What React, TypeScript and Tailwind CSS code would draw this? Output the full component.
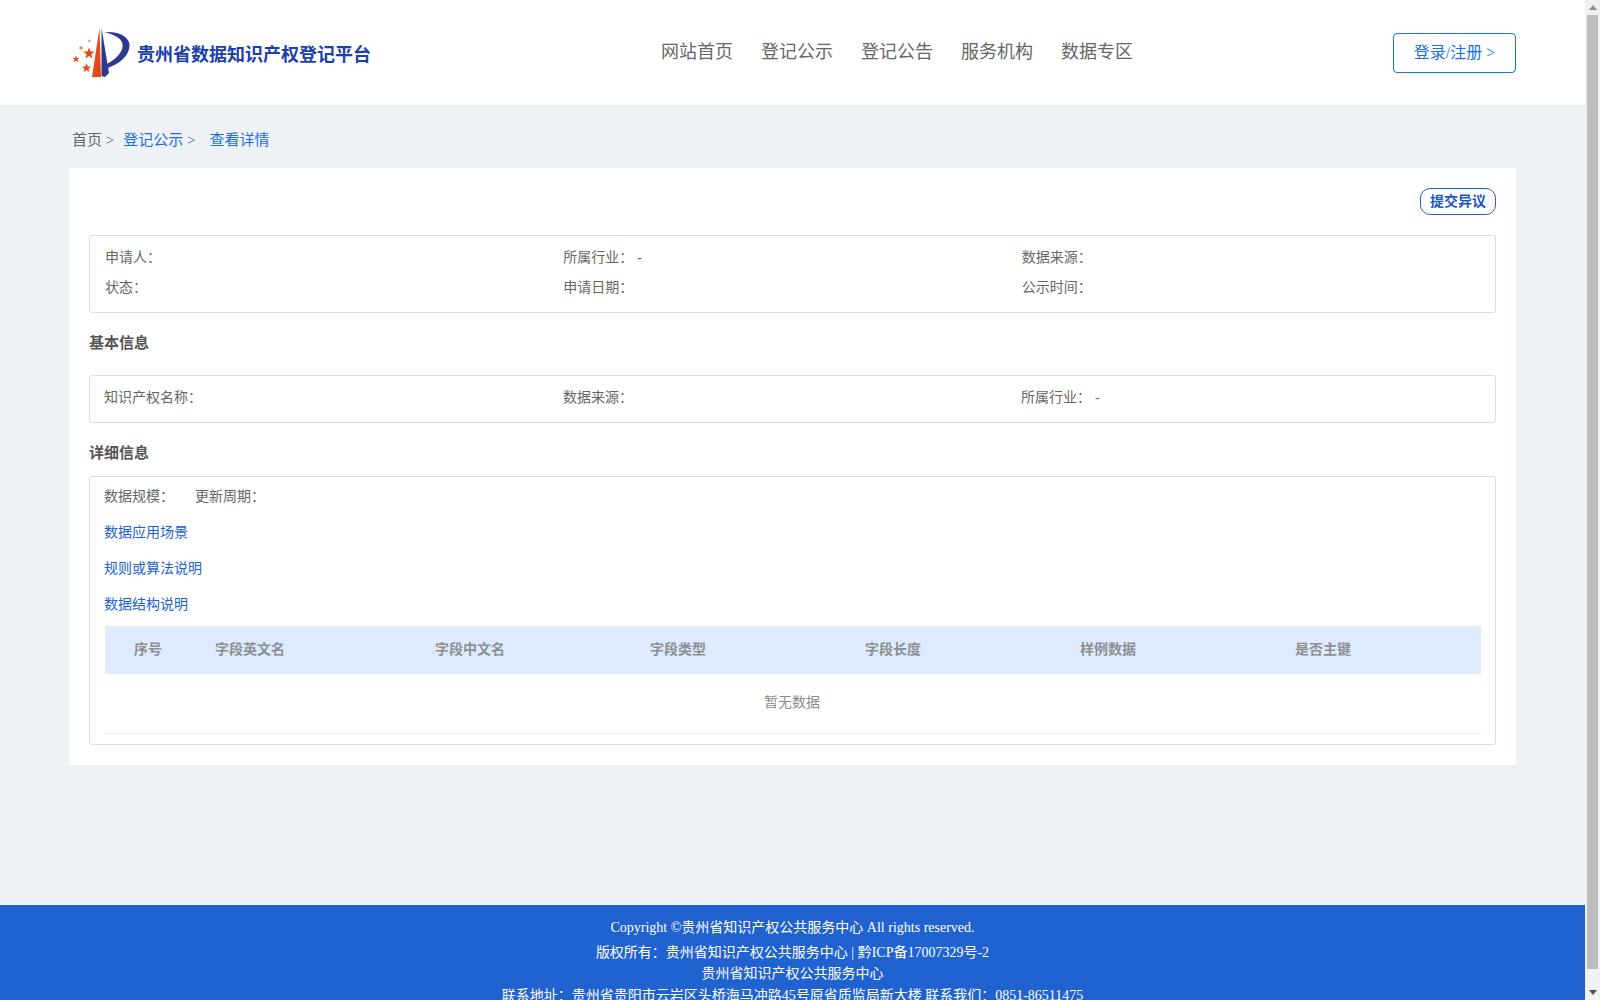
import React from "react";

const Field = ({ label, value }: { label: string; value?: string }) => (
  <div className="flex gap-[4px]">
    <span>{label}：</span>
    {value ? <span>{value}</span> : null}
  </div>
);

const Logo = () => (
  <svg width="62" height="56" viewBox="70 25 62 56" className="shrink-0">
    <path d="M99.5 28 L101 77 L92 77 Z" fill="#e8471a" />
    <path d="M101.5 28 L109 73 L105 77 L101.5 76 Z" fill="#2b3a8f" />
    <path d="M104 32 C120 31 130 37 129.5 46 C129 57 118 64 108 68 L107 64 C116 59 123 52 122.7 45 C122.3 38 113 34 104 32 Z" fill="#2b3a8f" />
    <polygon points="89,47.5 90.5,51.5 94.8,51.5 91.4,54.2 92.6,58.4 89,56 85.4,58.4 86.6,54.2 83.2,51.5 87.5,51.5" fill="#e8471a" />
    <polygon points="76,55.5 77,58 79.6,58 77.5,59.6 78.3,62.2 76,60.7 73.7,62.2 74.5,59.6 72.4,58 75,58" fill="#e8471a" />
    <polygon points="86.5,63.5 87.8,66.6 91.2,66.7 88.5,68.8 89.5,72 86.5,70.1 83.5,72 84.5,68.8 81.8,66.7 85.2,66.6" fill="#e8471a" />
    <circle cx="81" cy="48" r="1.8" fill="#ee8a5e" />
    <circle cx="89.3" cy="41" r="1.3" fill="#f0a080" />
  </svg>
);

const columns = ["序号", "字段英文名", "字段中文名", "字段类型", "字段长度", "样例数据", "是否主键"];

const Scrollbar = () => (
  <div className="fixed right-0 top-0 h-[1000px] w-[15px] bg-[#f1f1f1] flex flex-col items-center">
    <div className="h-[15px] w-full flex items-center justify-center">
      <svg width="8" height="5" viewBox="0 0 8 5"><path d="M4 0 L8 5 L0 5 Z" fill="#8f8f8f" /></svg>
    </div>
    <div className="h-[954px] w-[11px] bg-[#bdbdbd]" />
    <div className="flex-1" />
    <div className="h-[15px] w-full flex items-center justify-center">
      <svg width="8" height="5" viewBox="0 0 8 5"><path d="M0 0 L8 0 L4 5 Z" fill="#505050" /></svg>
    </div>
  </div>
);

export default function App() {
  return (
    <div
      className="w-[1585px] min-h-[1018px] flex flex-col bg-[#eff2f5] text-[#666]"
      style={{ fontFamily: '"Liberation Serif", "Noto Sans CJK SC", serif' }}
    >
      <Scrollbar />
      <header className="h-[105px] bg-white flex items-center px-[69px]">
        <div className="w-[592px] flex items-center gap-[5px] pl-[1px]">
          <Logo />
          <span className="mt-[6px] text-[18px] font-bold text-[#1c3fae]">贵州省数据知识产权登记平台</span>
        </div>
        <nav className="flex-1 flex gap-[28px] text-[18px] text-[#666]">
          <a>网站首页</a>
          <a>登记公示</a>
          <a>登记公告</a>
          <a>服务机构</a>
          <a>数据专区</a>
        </nav>
        <button className="w-[123px] h-[40px] border border-[#1a6fe8] rounded-[4px] text-[16px] text-[#1a6fe8]">
          登录/注册 &gt;
        </button>
      </header>

      <div className="h-[63px] flex items-center pl-[72px] pt-[8px] text-[15px]">
        <span>首页 &gt;</span>
        <span className="ml-[9px] text-[#1a6fe8]">登记公示 &gt;</span>
        <span className="ml-[14px] text-[#1a6fe8]">查看详情</span>
      </div>

      <main className="mx-[69px] bg-white px-[20px] pt-[20px] pb-[20px] text-[14px]">
        <div className="flex justify-end">
          <button className="w-[76px] h-[27px] border border-[#2162d1] rounded-[10px] text-[14px] font-bold text-[#1b56c4]">
            提交异议
          </button>
        </div>

        <div className="mt-[20px] h-[78px] border border-[#ddd] rounded-[3px] px-[15px] pt-[11px] grid grid-cols-3 gap-y-[9px] content-start">
          <Field label="申请人" />
          <Field label="所属行业" value="-" />
          <Field label="数据来源" />
          <Field label="状态" />
          <Field label="申请日期" />
          <Field label="公示时间" />
        </div>

        <h2 className="h-[62px] flex items-center pb-[2px] text-[15px] font-bold text-[#555]">基本信息</h2>

        <div className="h-[48px] border border-[#ddd] rounded-[3px] pl-[14px] pr-[15px] pb-[4px] grid grid-cols-[459px_458px_458px] items-center">
          <Field label="知识产权名称" />
          <Field label="数据来源" />
          <Field label="所属行业" value="-" />
        </div>

        <h2 className="h-[53px] flex items-center pt-[8px] text-[15px] font-bold text-[#555]">详细信息</h2>

        <div className="border border-[#ddd] rounded-[3px] px-[14px] pb-[10px]">
          <div className="h-[37px] flex items-center gap-[21px] pt-[2px]">
            <span>数据规模：</span>
            <span>更新周期：</span>
          </div>
          <div className="h-[36px] flex items-center text-[#2162d1]">数据应用场景</div>
          <div className="h-[36px] flex items-center text-[#2162d1]">规则或算法说明</div>
          <div className="h-[36px] flex items-center text-[#2162d1]">数据结构说明</div>
          <div className="mt-[4px] ml-[1px] h-[48px] pb-[2px] bg-[#deebfc] grid grid-cols-[81px_220px_repeat(5,215px)] items-center font-bold text-[#8c8f94]">
            {columns.map((c) => (
              <span key={c} className="pl-[29px]">{c}</span>
            ))}
          </div>
          <div className="ml-[1px] h-[60px] pb-[2px] pr-[2px] flex items-center justify-center text-[#8a8a8a] border-b border-[#eee]">暂无数据</div>
        </div>
      </main>

      <div className="flex-1" />

      <footer className="bg-[#2162d1] text-white text-[14px] leading-[21px] text-center pt-[12px] pb-[12px]">
        <p className="mb-[4px]">Copyright ©贵州省知识产权公共服务中心 All rights reserved.</p>
        <p>版权所有：贵州省知识产权公共服务中心 | 黔ICP备17007329号-2</p>
        <p>贵州省知识产权公共服务中心</p>
        <p className="mt-[1px]">联系地址：贵州省贵阳市云岩区头桥海马冲路45号原省质监局新大楼 联系我们：0851-86511475</p>
      </footer>
    </div>
  );
}
